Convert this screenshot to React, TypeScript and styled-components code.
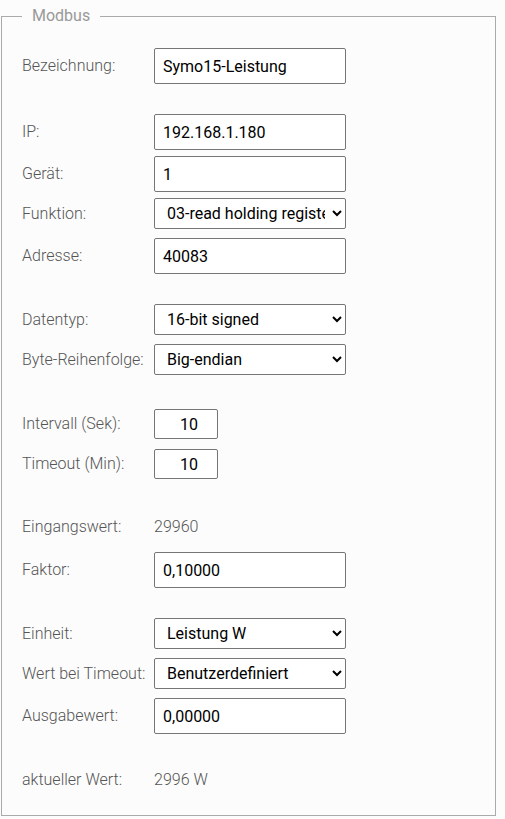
import React from "react";
import styled, { createGlobalStyle } from "styled-components";

const Global = createGlobalStyle`
  html, body { margin: 0; padding: 0; background: #fcfcfc; }
  body { font-family: Roboto, "Liberation Sans", sans-serif; }
`;

const Page = styled.div`
  padding: 0 0 0 1px;
  width: 505px;
  box-sizing: border-box;
`;

const Fieldset = styled.fieldset`
  box-sizing: border-box;
  width: 495px;
  margin: 6px 0 0 0;
  padding: 22px 20px 25px 20px;
  border: 1px solid #aaa;
  background: #fcfcfc;
  min-width: 0;
`;

const Legend = styled.legend`
  margin-left: 0;
  padding: 0 10px;
  font-size: 16px;
  line-height: 20px;
  font-weight: 400;
  color: #999;
`;

const Row = styled.div<{ $mt?: number }>`
  display: flex;
  align-items: center;
  margin-top: ${(p) => p.$mt ?? 0}px;
`;

const Label = styled.label`
  width: 132px;
  flex: none;
  font-size: 16px;
  line-height: 20px;
  font-weight: 300;
  color: #555;
`;

const Value = styled.span`
  font-size: 16px;
  line-height: 20px;
  font-weight: 300;
  color: #555;
`;

const TextInput = styled.input<{ $small?: boolean }>`
  box-sizing: border-box;
  width: ${(p) => (p.$small ? 64 : 192)}px;
  height: ${(p) => (p.$small ? 30 : 36)}px;
  padding: 0 ${(p) => (p.$small ? "0 0 6px" : "8px")};
  border: 1px solid #767676;
  border-radius: 2px;
  background: #fff;
  font-family: Roboto, "Liberation Sans", sans-serif;
  font-size: 16px;
  color: #000;
  text-align: ${(p) => (p.$small ? "center" : "left")};
  outline: none;
`;

const Select = styled.select`
  box-sizing: border-box;
  width: 192px;
  height: 31px;
  padding: 0 4px 0 8px;
  border: 1px solid #767676;
  border-radius: 2px;
  background: #fff;
  font-family: Roboto, "Liberation Sans", sans-serif;
  font-size: 16px;
  color: #000;
`;

const Field = ({ label, value, mt, small }: { label: string; value: string; mt?: number; small?: boolean }) => (
  <Row $mt={mt}>
    <Label>{label}</Label>
    <TextInput $small={small} defaultValue={value} />
  </Row>
);

const SelectField = ({ label, value, mt }: { label: string; value: string; mt?: number }) => (
  <Row $mt={mt}>
    <Label>{label}</Label>
    <Select defaultValue={value}>
      <option>{value}</option>
    </Select>
  </Row>
);

const Info = ({ label, value, mt }: { label: string; value: string; mt?: number }) => (
  <Row $mt={mt}>
    <Label>{label}</Label>
    <Value>{value}</Value>
  </Row>
);

export default function App() {
  return (
    <Page>
      <Global />
      <Fieldset>
        <Legend>Modbus</Legend>
        <Field label="Bezeichnung:" value="Symo15-Leistung" />
        <Field label="IP:" value="192.168.1.180" mt={30} />
        <Field label="Gerät:" value="1" mt={6} />
        <SelectField label="Funktion:" value="03-read holding register" mt={6} />
        <Field label="Adresse:" value="40083" mt={9} />
        <SelectField label="Datentyp:" value="16-bit signed" mt={30} />
        <SelectField label="Byte-Reihenfolge:" value="Big-endian" mt={9} />
        <Field label="Intervall (Sek):" value="10" small mt={34} />
        <Field label="Timeout (Min):" value="10" small mt={10} />
        <Info label="Eingangswert:" value="29960" mt={38} />
        <Field label="Faktor:" value="0,10000" mt={15} />
        <SelectField label="Einheit:" value="Leistung W" mt={30} />
        <SelectField label="Wert bei Timeout:" value="Benutzerdefiniert" mt={9} />
        <Field label="Ausgabewert:" value="0,00000" mt={9} />
        <Info label="aktueller Wert:" value="2996 W" mt={36} />
      </Fieldset>
    </Page>
  );
}
